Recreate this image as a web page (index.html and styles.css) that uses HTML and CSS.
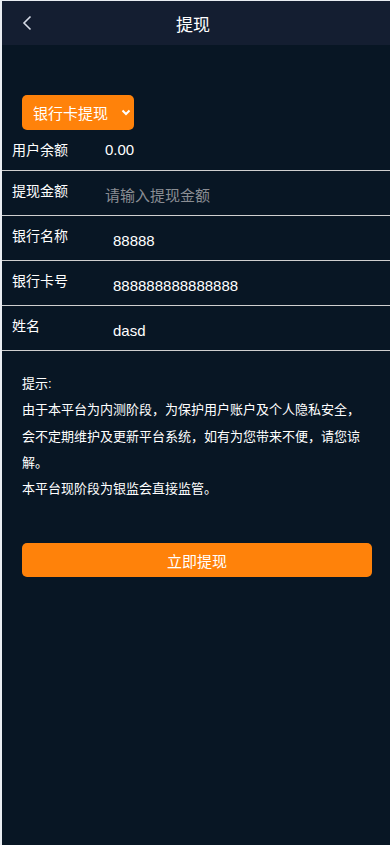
FILE: index.html
```html
<!doctype html>
<html lang="zh">
<head>
	<meta charset="UTF-8">
	<meta name="viewport" content="width=device-width, initial-scale=1">
	<title>提现</title>
	<link rel="stylesheet" href="styles.css">
</head>
<body>

<div class="wd-page">
	<header class="wd-bar">
		<a class="wd-bar__back" href="#">
			<svg width="10" height="16" viewBox="0 0 10 16"><path d="M8.5 1.5 2 8l6.5 6.5" fill="none" stroke="#d6dbe6" stroke-width="1.6"/></svg>
		</a>
		<h1 class="wd-bar__title">提现</h1>
	</header>

	<div class="wd-type">
		<button class="wd-type__btn" type="button">银行卡提现
			<svg class="wd-type__arrow" width="10" height="7" viewBox="0 0 10 7"><path d="M1.5 1.5 5 5l3.5-3.5" fill="none" stroke="#fff" stroke-width="2"/></svg>
		</button>
	</div>

	<div class="wd-form">
		<div class="wd-row wd-row--first">
			<span class="wd-row__label">用户余额</span>
			<span class="wd-row__value">0.00</span>
		</div>
		<div class="wd-row">
			<span class="wd-row__label">提现金额</span>
			<input class="wd-row__input" type="text" placeholder="请输入提现金额">
		</div>
		<div class="wd-row">
			<span class="wd-row__label">银行名称</span>
			<input class="wd-row__input wd-row__input--far" type="text" value="88888">
		</div>
		<div class="wd-row">
			<span class="wd-row__label">银行卡号</span>
			<input class="wd-row__input wd-row__input--far" type="text" value="888888888888888">
		</div>
		<div class="wd-row">
			<span class="wd-row__label">姓名</span>
			<input class="wd-row__input wd-row__input--far" type="text" value="dasd">
		</div>
	</div>

	<div class="wd-tips">
		<p>提示:</p>
		<p>由于本平台为内测阶段，为保护用户账户及个人隐私安全，会不定期维护及更新平台系统，如有为您带来不便，请您谅解。</p>
		<p>本平台现阶段为银监会直接监管。</p>
	</div>

	<div class="wd-submit">
		<button class="wd-submit__btn" type="button">立即提现</button>
	</div>
</div>

</body>
</html>
```

FILE: styles.css
```css
* {
	margin: 0;
	padding: 0;
	box-sizing: border-box;
}
body {
	background-color: #e9edf2;
	color: #fff;
	font-family: 'Liberation Sans', 'Noto Sans CJK SC', sans-serif;
	font-size: 14px;
}
.wd-page {
	margin: 1px 0 0 2px;
	min-height: 844px;
	background-color: #081624;
}
.wd-bar {
	position: relative;
	height: 44px;
	background-color: #141e31;
	display: flex;
	align-items: center;
	justify-content: center;
}
.wd-bar__back {
	position: absolute;
	left: 20px;
	top: 14px;
	display: flex;
}
.wd-bar__title {
	font-size: 17px;
	font-weight: normal;
	color: #fff;
	margin-left: -6px;
}
.wd-type {
	padding: 50px 0 0 20px;
}
.wd-type__btn {
	display: flex;
	align-items: center;
	height: 35px;
	width: 112px;
	padding-left: 11px;
	border: 0;
	border-radius: 5px;
	background-color: #ff820a;
	color: #fff;
	font-family: inherit;
	font-size: 15px;
}
.wd-type__arrow {
	margin-left: 13px;
}
.wd-row {
	display: flex;
	align-items: flex-start;
	height: 45px;
	padding: 11px 0 0 10px;
	border-bottom: 1px solid #cfcfcf;
}
.wd-row--first {
	height: 41px;
}
.wd-row__label {
	width: 93px;
	line-height: 18px;
	font-size: 14px;
}
.wd-row__value {
	line-height: 18px;
	font-size: 15px;
}
.wd-row__input {
	margin-top: 4px;
	height: 18px;
	width: 240px;
	background: transparent;
	border: 0;
	outline: none;
	color: #fff;
	font-family: inherit;
	font-size: 15px;
}
.wd-row__input::placeholder {
	color: #8a8d93;
}
.wd-row__input--far {
	margin-left: 8px;
}
.wd-tips {
	padding: 20px 22px 0 20px;
	font-size: 13px;
	line-height: 26.3px;
}
.wd-submit {
	padding: 41px 18px 0 20px;
}
.wd-submit__btn {
	width: 100%;
	height: 34px;
	border: 0;
	border-radius: 5px;
	background-color: #ff820a;
	color: #fff;
	font-family: inherit;
	font-size: 15px;
}
```
